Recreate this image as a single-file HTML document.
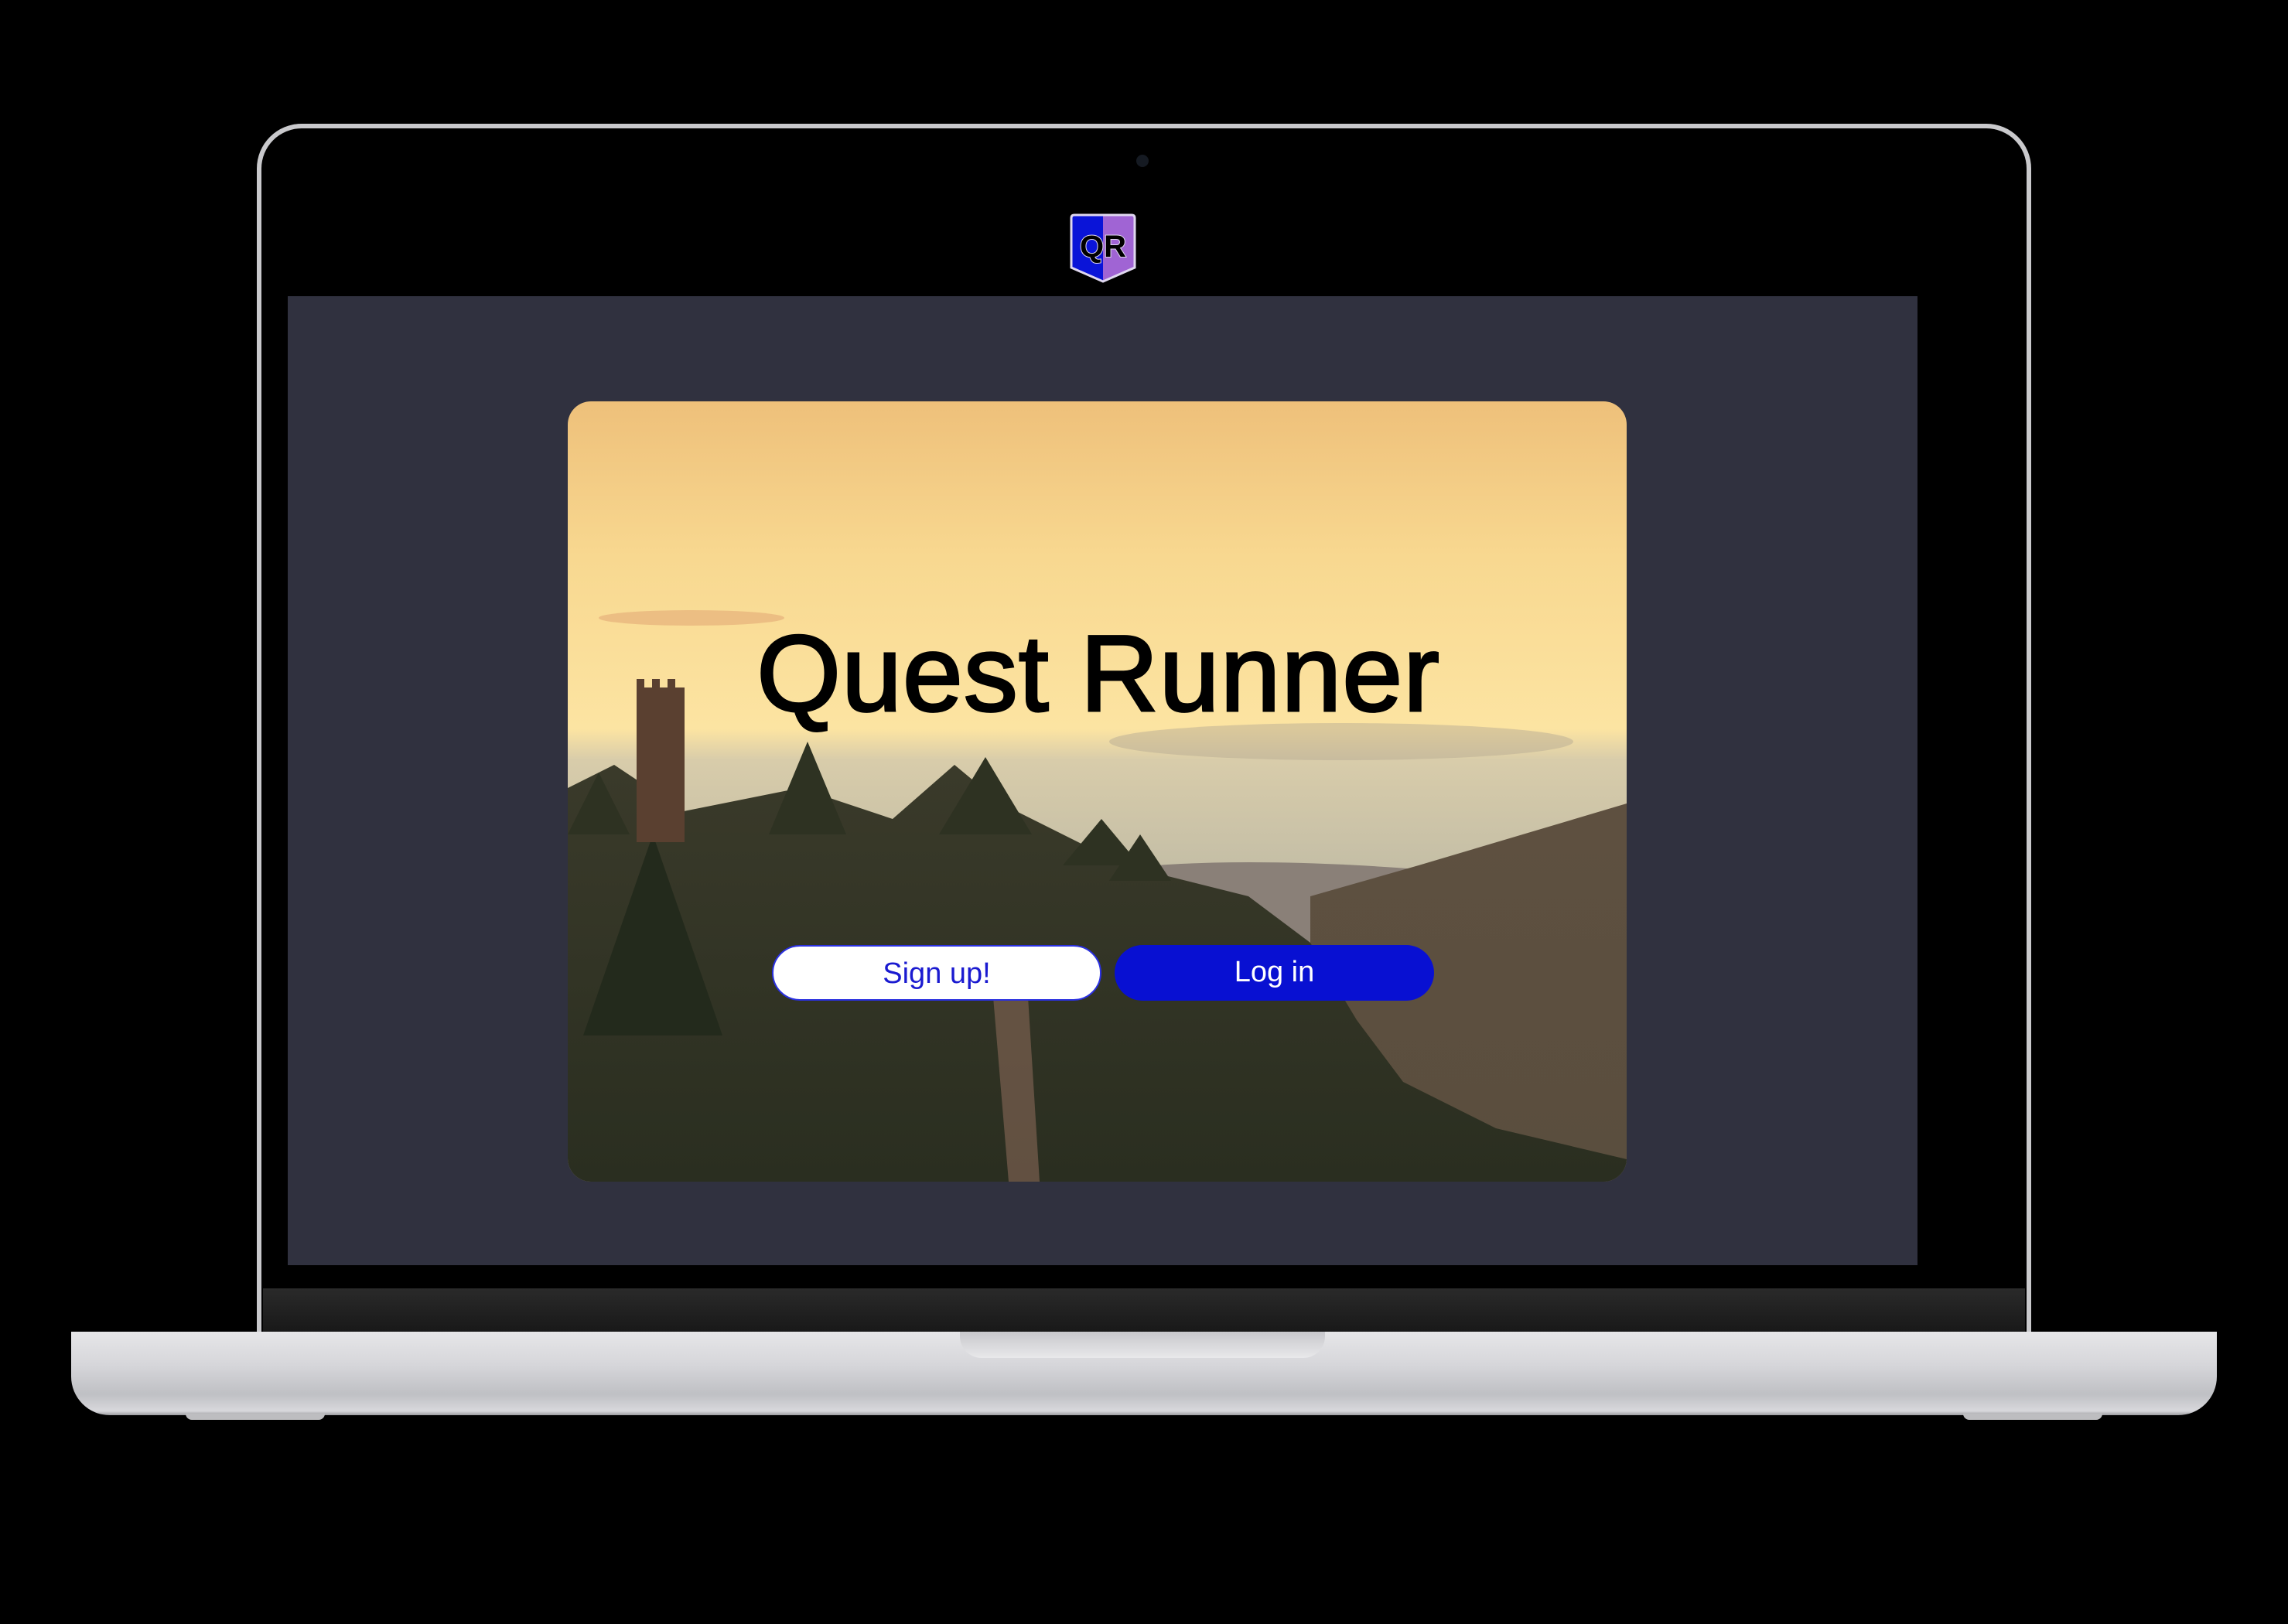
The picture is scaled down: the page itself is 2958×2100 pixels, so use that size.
<!DOCTYPE html>
<html><head><meta charset="utf-8"><style>
html,body{margin:0;padding:0;background:#000;width:2958px;height:2100px;overflow:hidden;font-family:"Liberation Sans",sans-serif}
.abs{position:absolute}
.lid{left:332px;top:160px;width:2294px;height:1580px;border:6px solid #c9c9cc;border-bottom:none;border-radius:58px 58px 0 0;background:#000;box-sizing:border-box}
.screen{left:372px;top:383px;width:2107px;height:1253px;background:#30313f}
.bez{left:340px;top:1666px;width:2278px;height:58px;background:linear-gradient(#2a2a2a,#181818)}
.base{left:92px;top:1722px;width:2774px;height:108px;border-radius:0 0 50px 50px;background:linear-gradient(#e6e6e8 0%,#d6d6da 40%,#bfc0c4 75%,#d8d8dc 95%,#9c9ca0 100%)}
.notch{left:1241px;top:1722px;width:472px;height:34px;border-radius:0 0 28px 28px;background:linear-gradient(#c8c8cc,#e8e8ea)}
.foot{top:1828px;width:180px;height:8px;border-radius:0 0 10px 10px;background:#bdbdc0}
.card{left:734px;top:519px;width:1369px;height:1009px;border-radius:30px;overflow:hidden}
.btn{top:703px;height:72px;border-radius:36px;box-sizing:border-box;text-align:center;line-height:70px;font-size:38px}
</style></head><body>
<div class="abs lid"></div>
<div class="abs" style="left:1469px;top:200px;width:16px;height:16px;border-radius:50%;background:#151a22"></div>
<svg class="abs" style="left:1381px;top:276px" width="90" height="92" viewBox="0 0 90 92">
<path d="M4 6 Q4 2 8 2 H45 V88 L4 70 Z" fill="#0a14d8"/>
<path d="M45 2 H82 Q86 2 86 6 V70 L45 88 Z" fill="#a064d4"/>
<path d="M4 6 Q4 2 8 2 H82 Q86 2 86 6 V70 L45 88 L4 70 Z" fill="none" stroke="#e0d8f0" stroke-width="3"/>
<text x="45" y="56" text-anchor="middle" font-size="40" font-family="Liberation Sans" font-weight="bold" fill="#000" stroke="#e0d8f0" stroke-width="2" paint-order="stroke">QR</text>
</svg>
<div class="abs screen"></div>
<div class="abs card">
<svg width="1369" height="1009" viewBox="0 0 1369 1009">
<defs>
<linearGradient id="sky" x1="0" y1="0" x2="0" y2="1">
<stop offset="0" stop-color="#eec07a"/><stop offset=".2" stop-color="#f8d890"/><stop offset=".42" stop-color="#fce4a2"/><stop offset=".46" stop-color="#d8ccaa"/><stop offset=".6" stop-color="#c4bea6"/><stop offset="1" stop-color="#a09080"/>
</linearGradient>
<linearGradient id="for" x1="0" y1="0" x2="0" y2="1">
<stop offset="0" stop-color="#3a3a2a"/><stop offset="1" stop-color="#2a2e20"/>
</linearGradient>
<linearGradient id="hill" x1="0" y1="0" x2="0" y2="1">
<stop offset="0" stop-color="#5e5040"/><stop offset="1" stop-color="#5a4e3e"/>
</linearGradient>
</defs>
<rect width="1369" height="1009" fill="url(#sky)"/>
<ellipse cx="1000" cy="440" rx="300" ry="24" fill="#b8ac94" opacity=".5"/>
<ellipse cx="160" cy="280" rx="120" ry="10" fill="#e0a070" opacity=".5"/>
<path d="M760 600 Q900 590 1100 605 L1100 700 L760 700Z" fill="#8a8078"/>
<path d="M960 640 L1100 600 L1369 520 L1369 1009 L960 1009Z" fill="url(#hill)"/>
<path d="M0 500 L60 470 L150 530 L300 500 L420 540 L500 470 L560 520 L640 560 L720 600 L800 620 L880 640 L960 700 L1020 800 L1080 880 L1200 940 L1369 980 L1369 1009 L0 1009Z" fill="url(#for)"/>
<path d="M0 560 L40 480 L80 560Z M260 560 L310 440 L360 560Z M480 560 L540 460 L600 560Z M640 600 L690 540 L740 600Z M700 620 L740 560 L780 620Z" fill="#2e3222"/>
<path d="M20 820 L110 560 L200 820Z" fill="#232a1c"/>
<rect x="89" y="370" width="62" height="200" fill="#5a4030"/>
<path d="M89 359 h10 v12 h10 v-12 h10 v12 h10 v-12 h10 v12 h12 v10 h-62z" fill="#5a4030"/>
<path d="M550 770 L595 770 L610 1009 L570 1009Z" fill="#7a6050" opacity=".7"/>
<text x="686" y="400" text-anchor="middle" font-size="140" font-family="Liberation Sans" fill="#000" stroke="#000" stroke-width="3" letter-spacing="1">Quest Runner</text>
</svg>
<div class="abs btn" style="left:264px;width:426px;background:#fff;border:2px solid #2a30e0;color:#1a1ad0">Sign up!</div>
<div class="abs btn" style="left:707px;width:413px;background:#0810d2;color:#fff">Log in</div>
</div>
<div class="abs bez"></div>
<div class="abs base"></div>
<div class="abs notch"></div>
<div class="abs foot" style="left:240px"></div>
<div class="abs foot" style="left:2538px"></div>
</body></html>
